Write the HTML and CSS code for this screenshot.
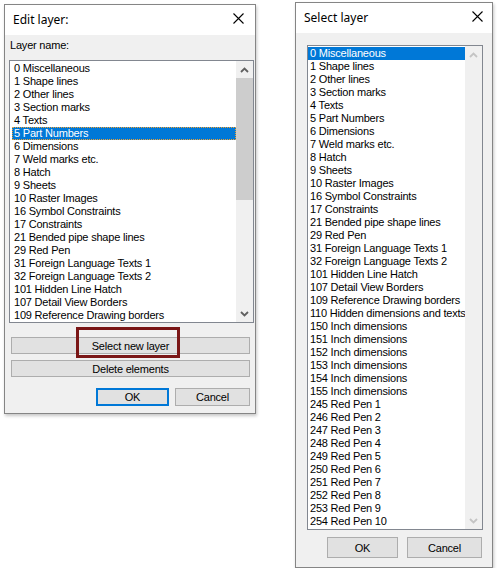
FILE: index.html
```html
<!DOCTYPE html>
<html lang="en">
<head>
  <meta charset="UTF-8" />
  <title>Layers</title>
  <meta name="viewport" content="width=device-width, initial-scale=1" />
  <link rel="stylesheet" href="styles.css">
</head>
<body>
  <div class="dialog edit">
    <div class="titlebar">
      <span class="title">Edit layer:</span>
      <svg class="close" width="11" height="11" viewBox="0 0 11 11"><path d="M0.5 0.5 L10.5 10.5 M10.5 0.5 L0.5 10.5" stroke="#000" stroke-width="1.1" fill="none"/></svg>
    </div>
    <div class="body">
      <div class="label">Layer name:</div>
      <div class="listbox">
        <ul class="items">
          <li>0 Miscellaneous</li>
          <li>1 Shape lines</li>
          <li>2 Other lines</li>
          <li>3 Section marks</li>
          <li>4 Texts</li>
          <li class="selected focus">5 Part Numbers</li>
          <li>6 Dimensions</li>
          <li>7 Weld marks etc.</li>
          <li>8 Hatch</li>
          <li>9 Sheets</li>
          <li>10 Raster Images</li>
          <li>16 Symbol Constraints</li>
          <li>17 Constraints</li>
          <li>21 Bended pipe shape lines</li>
          <li>29 Red Pen</li>
          <li>31 Foreign Language Texts 1</li>
          <li>32 Foreign Language Texts 2</li>
          <li>101 Hidden Line Hatch</li>
          <li>107 Detail View Borders</li>
          <li>109 Reference Drawing borders</li>
        </ul>
        <div class="scrollbar">
          <div class="arrow"><svg width="9" height="6" viewBox="0 0 9 6"><path d="M1 5 L4.5 1.5 L8 5" stroke="#606060" stroke-width="1.8" fill="none"/></svg></div>
          <div class="track"><div class="thumb"></div></div>
          <div class="arrow"><svg width="9" height="6" viewBox="0 0 9 6"><path d="M1 1 L4.5 4.5 L8 1" stroke="#606060" stroke-width="1.8" fill="none"/></svg></div>
        </div>
      </div>
      <div class="wide-btn marked">
        <button type="button">Select new layer</button>
        <div class="mark"></div>
      </div>
      <div class="wide-btn second">
        <button type="button">Delete elements</button>
      </div>
      <div class="actions">
        <button type="button" class="ok default">OK</button>
        <button type="button" class="cancel">Cancel</button>
      </div>
    </div>
  </div>

  <div class="dialog select">
    <div class="titlebar">
      <span class="title">Select layer</span>
      <svg class="close" width="11" height="11" viewBox="0 0 11 11"><path d="M0.5 0.5 L10.5 10.5 M10.5 0.5 L0.5 10.5" stroke="#000" stroke-width="1.1" fill="none"/></svg>
    </div>
    <div class="body">
      <div class="listbox">
        <ul class="items">
          <li class="selected">0 Miscellaneous</li>
          <li>1 Shape lines</li>
          <li>2 Other lines</li>
          <li>3 Section marks</li>
          <li>4 Texts</li>
          <li>5 Part Numbers</li>
          <li>6 Dimensions</li>
          <li>7 Weld marks etc.</li>
          <li>8 Hatch</li>
          <li>9 Sheets</li>
          <li>10 Raster Images</li>
          <li>16 Symbol Constraints</li>
          <li>17 Constraints</li>
          <li>21 Bended pipe shape lines</li>
          <li>29 Red Pen</li>
          <li>31 Foreign Language Texts 1</li>
          <li>32 Foreign Language Texts 2</li>
          <li>101 Hidden Line Hatch</li>
          <li>107 Detail View Borders</li>
          <li>109 Reference Drawing borders</li>
          <li>110 Hidden dimensions and texts</li>
          <li>150 Inch dimensions</li>
          <li>151 Inch dimensions</li>
          <li>152 Inch dimensions</li>
          <li>153 Inch dimensions</li>
          <li>154 Inch dimensions</li>
          <li>155 Inch dimensions</li>
          <li>245 Red Pen 1</li>
          <li>246 Red Pen 2</li>
          <li>247 Red Pen 3</li>
          <li>248 Red Pen 4</li>
          <li>249 Red Pen 5</li>
          <li>250 Red Pen 6</li>
          <li>251 Red Pen 7</li>
          <li>252 Red Pen 8</li>
          <li>253 Red Pen 9</li>
          <li>254 Red Pen 10</li>
        </ul>
        <div class="scrollbar disabled">
          <div class="arrow"><svg width="9" height="6" viewBox="0 0 9 6"><path d="M1 5 L4.5 1.5 L8 5" stroke="#c4c4c4" stroke-width="1.8" fill="none"/></svg></div>
          <div class="track"></div>
          <div class="arrow"><svg width="9" height="6" viewBox="0 0 9 6"><path d="M1 1 L4.5 4.5 L8 1" stroke="#c4c4c4" stroke-width="1.8" fill="none"/></svg></div>
        </div>
      </div>
      <div class="actions">
        <button type="button" class="ok">OK</button>
        <button type="button" class="cancel">Cancel</button>
      </div>
    </div>
  </div>
</body>
</html>
```

FILE: styles.css
```css
body {
  margin: 0;
  padding: 2px 0 0 4px;
  background: #fff;
  display: flex;
  align-items: flex-start;
  gap: 39px;
  font-family: 'Liberation Sans', Arial, sans-serif;
  font-size: 11px;
  letter-spacing: -0.2px;
  color: #000;
}
.dialog {
  border: 1px solid #858585;
  background: #f0f0f0;
  box-shadow: 1px 2px 3px rgba(0, 0, 0, 0.22);
  display: flex;
  flex-direction: column;
}
.edit {
  width: 250px;
  margin-top: 2px;
}
.select {
  width: 196px;
}
.titlebar {
  background: #fff;
  display: flex;
  align-items: center;
  justify-content: space-between;
  font-family: 'Noto Sans', 'Open Sans', sans-serif;
  font-size: 12px;
  letter-spacing: 0;
}
.edit .titlebar {
  height: 30px;
  padding: 0 11px 0 8px;
}
.select .titlebar {
  height: 30px;
  padding: 0 9px 0 8px;
}
.title {
  margin-top: -2px;
}
.close {
  margin-top: -4px;
}
.body {
  display: flex;
  flex-direction: column;
}
.edit .body {
  padding: 4px 0 7px 0;
}
.select .body {
  padding: 12px 0 9px 0;
}
.label {
  height: 13px;
  line-height: 13px;
  padding-left: 5px;
  margin-bottom: 8px;
}
.listbox {
  background: #fff;
  border: 1px solid #828790;
  display: flex;
}
.edit .listbox {
  margin: 0 1px 0 4px;
  padding-top: 1px;
}
.select .listbox {
  margin: 0 9px 0 11px;
  padding: 1px 0;
}
.items {
  list-style: none;
  margin: 0;
  padding: 0;
  flex: 1;
  overflow: hidden;
  white-space: nowrap;
}
.items li {
  height: 13px;
  line-height: 13px;
  padding-left: 2px;
  box-sizing: border-box;
}
.edit .items li {
  margin-left: 2px;
}
.items li.selected {
  background: #0078d7;
  color: #fff;
}
.items li.focus {
  border: 1px dotted #f0a030;
  padding-left: 1px;
  line-height: 11px;
}
.scrollbar {
  width: 17px;
  background: #f0f0f0;
  display: flex;
  flex-direction: column;
}
.edit .scrollbar {
  margin-top: -1px;
}
.select .scrollbar {
  margin: -1px 0;
}
.arrow {
  height: 17px;
  display: flex;
  align-items: center;
  justify-content: center;
}
.track {
  flex: 1;
}
.thumb {
  height: 122px;
  background: #cdcdcd;
}
button {
  font-family: 'Liberation Sans', Arial, sans-serif;
  font-size: 11px;
  letter-spacing: -0.2px;
  color: #000;
  background: #e1e1e1;
  border: 1px solid #adadad;
  padding: 0;
  margin: 0;
  box-sizing: border-box;
  cursor: pointer;
}
.wide-btn {
  position: relative;
  margin: 0 5px 0 6px;
}
.wide-btn button {
  width: 100%;
  height: 17px;
}
.marked {
  margin-top: 14px;
}
.second {
  margin-top: 6px;
}
.mark {
  position: absolute;
  left: 65px;
  top: -10px;
  width: 104px;
  height: 31px;
  border: 3px solid #7a1616;
  box-sizing: border-box;
  pointer-events: none;
}
.actions {
  display: flex;
  justify-content: flex-end;
}
.edit .actions {
  margin: 11px 5px 0 0;
  gap: 6px;
}
.select .actions {
  margin: 7px 10px 0 0;
  gap: 9px;
}
.edit .ok {
  width: 73px;
  height: 18px;
}
.edit .cancel {
  width: 75px;
  height: 18px;
}
.select .ok {
  width: 71px;
  height: 21px;
}
.select .cancel {
  width: 75px;
  height: 21px;
}
.default {
  border: 2px solid #0078d7;
}
```
